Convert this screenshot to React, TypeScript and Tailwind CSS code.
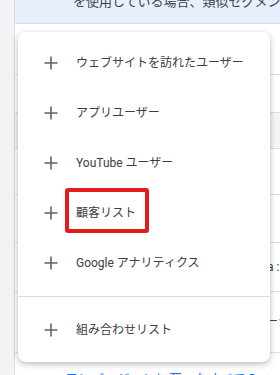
const items = [
  'ウェブサイトを訪れたユーザー',
  'アプリユーザー',
  'YouTube ユーザー',
  '顧客リスト',
  'Google アナリティクス',
]

function PlusIcon() {
  return (
    <svg width="14" height="14" viewBox="0 0 14 14" className="shrink-0">
      <path d="M7 0.5v13M0.5 7h13" stroke="#5f6368" strokeWidth="1.6" fill="none" />
    </svg>
  )
}

function MenuItem({ label }: { label: string }) {
  return (
    <div className="h-[50px] flex items-center pl-[26px] gap-[18px]">
      <PlusIcon />
      <span className="text-[12px] text-[#3c4043] whitespace-nowrap">{label}</span>
    </div>
  )
}

export default function App() {
  return (
    <div
      className="relative w-[280px] h-[375px] overflow-hidden bg-white flex"
      style={{ fontFamily: 'Roboto, "Noto Sans CJK JP", sans-serif' }}
    >
      {/* left rail */}
      <div className="w-[15px] shrink-0 bg-[#f1f3f4] border-r border-[#dadce0]" />

      {/* page behind the menu */}
      <div className="flex-1 flex flex-col min-w-0">
        <div className="h-[24px] shrink-0 bg-[#e8f0fe] border-b border-[#dadce0] overflow-hidden">
          <p className="pl-[58px] -mt-[6px] text-[13px] leading-[16px] text-[#3c4043] whitespace-nowrap">
            を使用している場合、類似セグメントを
          </p>
        </div>
        <div className="h-[51px] shrink-0 border-b border-[#e0e0e0]" />
        <div className="h-[38px] shrink-0 border-b border-[#e0e0e0]" />
        <div className="h-[36px] shrink-0 border-b border-[#e0e0e0] bg-[#f5f5f5]" />
        <div className="h-[46px] shrink-0 border-b border-[#e0e0e0]" />
        <div className="h-[48px] shrink-0 border-b border-[#e0e0e0]" />
        <div className="h-[49px] shrink-0 border-b border-[#e0e0e0] flex items-center overflow-hidden">
          <span className="pl-[252px] text-[12px] text-[#3c4043] whitespace-nowrap">a :</span>
        </div>
        <div className="h-[61px] shrink-0 border-b border-[#e0e0e0] flex items-center overflow-hidden">
          <span className="pl-[251px] text-[12px] text-[#3c4043] whitespace-nowrap">ーシ</span>
        </div>
        <div className="pt-[13px] pl-[50px] overflow-hidden">
          <span className="text-[13px] leading-[16px] text-[#1a73e8] whitespace-nowrap">
            コンバージョンに至ったすべてのユーザー
          </span>
        </div>
      </div>

      {/* dropdown menu */}
      <div className="absolute left-[18px] top-[32px] w-[252px] h-[330px] bg-white rounded-lg shadow-[0_2px_6px_rgba(0,0,0,0.28)]">
        <div className="pt-[6px] pb-2">
          {items.map(label => (
            <MenuItem key={label} label={label} />
          ))}
        </div>
        <div className="border-t border-[#dadce0]" />
        <div className="pt-2">
          <MenuItem label="組み合わせリスト" />
        </div>

        {/* red highlight */}
        <div className="absolute left-[47px] top-[156px] w-[84px] h-[45px] border-[4px] border-[#e31b1b] rounded-[3px]" />
      </div>
    </div>
  )
}
